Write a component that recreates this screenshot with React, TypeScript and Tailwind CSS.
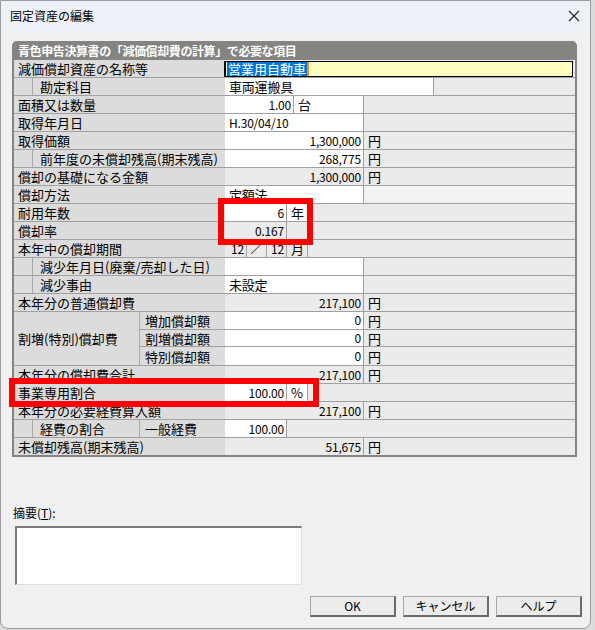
import type { ReactNode } from "react";

const JP = "font-['Noto_Sans_CJK_JP','Noto_Sans',sans-serif]";

type CellProps = {
  w: string;
  white?: boolean;
  right?: boolean;
  center?: boolean;
  children?: ReactNode;
};

function Cell({ w, white, right, center, children }: CellProps) {
  const align = right ? "justify-end pr-[2px]" : center ? "justify-center" : "pl-[4px]";
  return (
    <div
      className={`${w} flex shrink-0 items-center border-r border-[#a0a0a0] text-[12px] leading-none tracking-[-0.2px] ${align} ${
        white ? "bg-white" : "bg-[#ebebeb]"
      }`}
    >
      {children}
    </div>
  );
}

function Rest({ unit, light }: { unit?: string; light?: boolean }) {
  return (
    <div
      className={`flex flex-1 items-center pl-[4px] text-[13px] leading-none ${
        light ? "bg-[#f3f3f3]" : "bg-[#ebebeb]"
      }`}
    >
      {unit}
    </div>
  );
}

function Label({ children, indent }: { children: ReactNode; indent?: boolean }) {
  return (
    <div className="flex w-[211px] shrink-0">
      {indent && <div className="w-[19px] shrink-0 border-r border-[#a8a8a8] bg-[#dcdcdc]" />}
      <div
        className={`flex flex-1 items-center bg-[#dcdcdc] text-[13px] leading-none ${
          indent ? "pl-[7px]" : "pl-[4px]"
        }`}
      >
        {children}
      </div>
    </div>
  );
}

function Row({ children }: { children: ReactNode }) {
  return <div className="flex h-[18px] border-b border-[#a0a0a0]">{children}</div>;
}

function YenRow({ label, value, white, indent }: { label: string; value: string; white?: boolean; indent?: boolean }) {
  return (
    <Row>
      <Label indent={indent}>{label}</Label>
      <Cell w="w-[139px]" white={white} right>
        {value}
      </Cell>
      <Rest unit="円" />
    </Row>
  );
}

function SubRow({ label, value, last }: { label: string; value: string; last?: boolean }) {
  return (
    <div className={`flex h-[18px] ${last ? "" : "border-b border-[#a0a0a0]"}`}>
      <div className="flex w-[85px] shrink-0 items-center bg-[#dcdcdc] pl-[5px] text-[13px] leading-none">
        {label}
      </div>
      <Cell w="w-[139px]" white right>
        {value}
      </Cell>
      <Rest unit="円" />
    </div>
  );
}

function Button({ children }: { children: ReactNode }) {
  return (
    <button
      type="button"
      className="flex h-[21px] w-[86px] items-center justify-center border-t border-l border-[#a8a8a8] border-r-2 border-b-2 border-r-[#6a6a6a] border-b-[#6a6a6a] bg-[#ececec] text-[12px] leading-none"
    >
      {children}
    </button>
  );
}

export default function App() {
  return (
    <div className={`relative h-[630px] w-[595px] overflow-hidden bg-[#dcdcdc] text-black ${JP}`}>
      <div className="flex h-[629px] w-[591px] flex-col overflow-hidden rounded-b-lg border border-[#9c9c9c] bg-[#f0f0f0]">
        {/* title bar */}
        <div className="flex h-[30px] shrink-0 items-center justify-between bg-[#eef2f8] pl-[9px] pr-[8px]">
          <span className="text-[12px]">固定資産の編集</span>
          <svg width="12" height="12" viewBox="0 0 12 12" className="mr-[2px]">
            <path d="M1 1 L11 11 M11 1 L1 11" stroke="#222" strokeWidth="1.1" fill="none" />
          </svg>
        </div>

        <div className="flex flex-1 flex-col px-[11px] pt-[10px]">
          {/* table panel */}
          <div className="w-[565px] rounded-t-[5px] border-x-2 border-b-2 border-[#858480] bg-[#858480]">
            <div className="flex h-[19px] items-center pl-[4px] text-[12px] font-bold leading-none tracking-[-0.4px] text-white">
              青色申告決算書の「減価償却費の計算」で必要な項目
            </div>
            <div className="bg-[#ebebeb]">
              <Row>
                <Label>減価償却資産の名称等</Label>
                <div className="-ml-px mt-[1px] flex h-[16px] w-[349px] items-center border border-l-2 border-black bg-[#ffffc0] pl-[1px]">
                  <span className="bg-[#0078d7] px-px text-[13px] leading-[14px] text-white">営業用自動車</span>
                  <span className="h-[14px] w-[2px] bg-[#f08a24]" />
                </div>
                <div className="flex-1 bg-[#ebebeb]" />
              </Row>
              <Row>
                <Label indent>勘定科目</Label>
                <Cell w="w-[209px]" white>
                  <span className="text-[13px]">車両運搬具</span>
                </Cell>
                <Rest />
              </Row>
              <Row>
                <Label>面積又は数量</Label>
                <Cell w="w-[69px]" white right>
                  1.00
                </Cell>
                <Cell w="w-[70px]" white>
                  <span className="text-[13px]">台</span>
                </Cell>
                <Rest />
              </Row>
              <Row>
                <Label>取得年月日</Label>
                <Cell w="w-[139px]" white>
                  H.30/04/10
                </Cell>
                <Rest />
              </Row>
              <YenRow label="取得価額" value="1,300,000" white />
              <YenRow label="前年度の未償却残高(期末残高)" value="268,775" white indent />
              <YenRow label="償却の基礎になる金額" value="1,300,000" />
              <Row>
                <Label>償却方法</Label>
                <Cell w="w-[139px]" white>
                  <span className="text-[13px]">定額法</span>
                </Cell>
                <Rest light />
              </Row>
              <Row>
                <Label>耐用年数</Label>
                <Cell w="w-[62px]" white right>
                  6
                </Cell>
                <Cell w="w-[21px]" white>
                  <span className="text-[13px]">年</span>
                </Cell>
                <Rest />
              </Row>
              <Row>
                <Label>償却率</Label>
                <Cell w="w-[62px]" right>
                  0.167
                </Cell>
                <Cell w="w-[21px]" />
                <Rest />
              </Row>
              <Row>
                <Label>本年中の償却期間</Label>
                <Cell w="w-[22px]" right>
                  12
                </Cell>
                <Cell w="w-[20px]" center>
                  ／
                </Cell>
                <Cell w="w-[20px]" right>
                  12
                </Cell>
                <Cell w="w-[21px]">
                  <span className="text-[13px]">月</span>
                </Cell>
                <Rest />
              </Row>
              <Row>
                <Label indent>減少年月日(廃棄/売却した日)</Label>
                <Cell w="w-[139px]" white />
                <Rest />
              </Row>
              <Row>
                <Label indent>減少事由</Label>
                <Cell w="w-[139px]" white>
                  <span className="text-[13px]">未設定</span>
                </Cell>
                <Rest />
              </Row>
              <YenRow label="本年分の普通償却費" value="217,100" />
              <div className="flex h-[54px] border-b border-[#a0a0a0]">
                <div className="flex w-[126px] shrink-0 items-center border-r border-[#a8a8a8] bg-[#dcdcdc] pl-[4px] text-[13px] leading-none">
                  割増(特別)償却費
                </div>
                <div className="flex flex-1 flex-col">
                  <SubRow label="増加償却額" value="0" />
                  <SubRow label="割増償却額" value="0" />
                  <SubRow label="特別償却額" value="0" last />
                </div>
              </div>
              <YenRow label="本年分の償却費合計" value="217,100" />
              <Row>
                <Label>事業専用割合</Label>
                <Cell w="w-[62px]" white right>
                  100.00
                </Cell>
                <Cell w="w-[21px]" white>
                  <span className="text-[13px]">%</span>
                </Cell>
                <Rest />
              </Row>
              <YenRow label="本年分の必要経費算入額" value="217,100" />
              <Row>
                <div className="w-[19px] shrink-0 border-r border-[#a8a8a8] bg-[#dcdcdc]" />
                <div className="flex w-[107px] shrink-0 items-center border-r border-[#a8a8a8] bg-[#dcdcdc] pl-[7px] text-[13px] leading-none">
                  経費の割合
                </div>
                <div className="flex w-[85px] shrink-0 items-center bg-[#dcdcdc] pl-[5px] text-[13px] leading-none">
                  一般経費
                </div>
                <Cell w="w-[62px]" white right>
                  100.00
                </Cell>
                <Rest />
              </Row>
              <div className="flex h-[17px]">
                <Label>未償却残高(期末残高)</Label>
                <Cell w="w-[139px]" right>
                  51,675
                </Cell>
                <Rest unit="円" />
              </div>
            </div>
          </div>

          {/* memo */}
          <div className="mt-[49px] flex flex-col">
            <span className="pl-px text-[12px] leading-[14px]">
              摘要(<span className="underline">T</span>):
            </span>
            <div className="ml-[3px] mt-[6px] h-[59px] w-[287px] border-t-2 border-l-2 border-[#7a7a7a] border-r border-b border-r-[#dedede] border-b-[#dedede] bg-white" />
          </div>

          <div className="-mr-[3px] mt-[11px] flex justify-end gap-[7px]">
            <Button>OK</Button>
            <Button>キャンセル</Button>
            <Button>ヘルプ</Button>
          </div>
        </div>
      </div>

      {/* red highlight annotations */}
      <div className="pointer-events-none absolute left-[218px] top-[198px] h-[47px] w-[95px] border-[6px] border-[#ff0000]" />
      <div className="pointer-events-none absolute left-[9px] top-[378px] h-[29px] w-[310px] border-[6px] border-[#ff0000]" />
    </div>
  );
}
